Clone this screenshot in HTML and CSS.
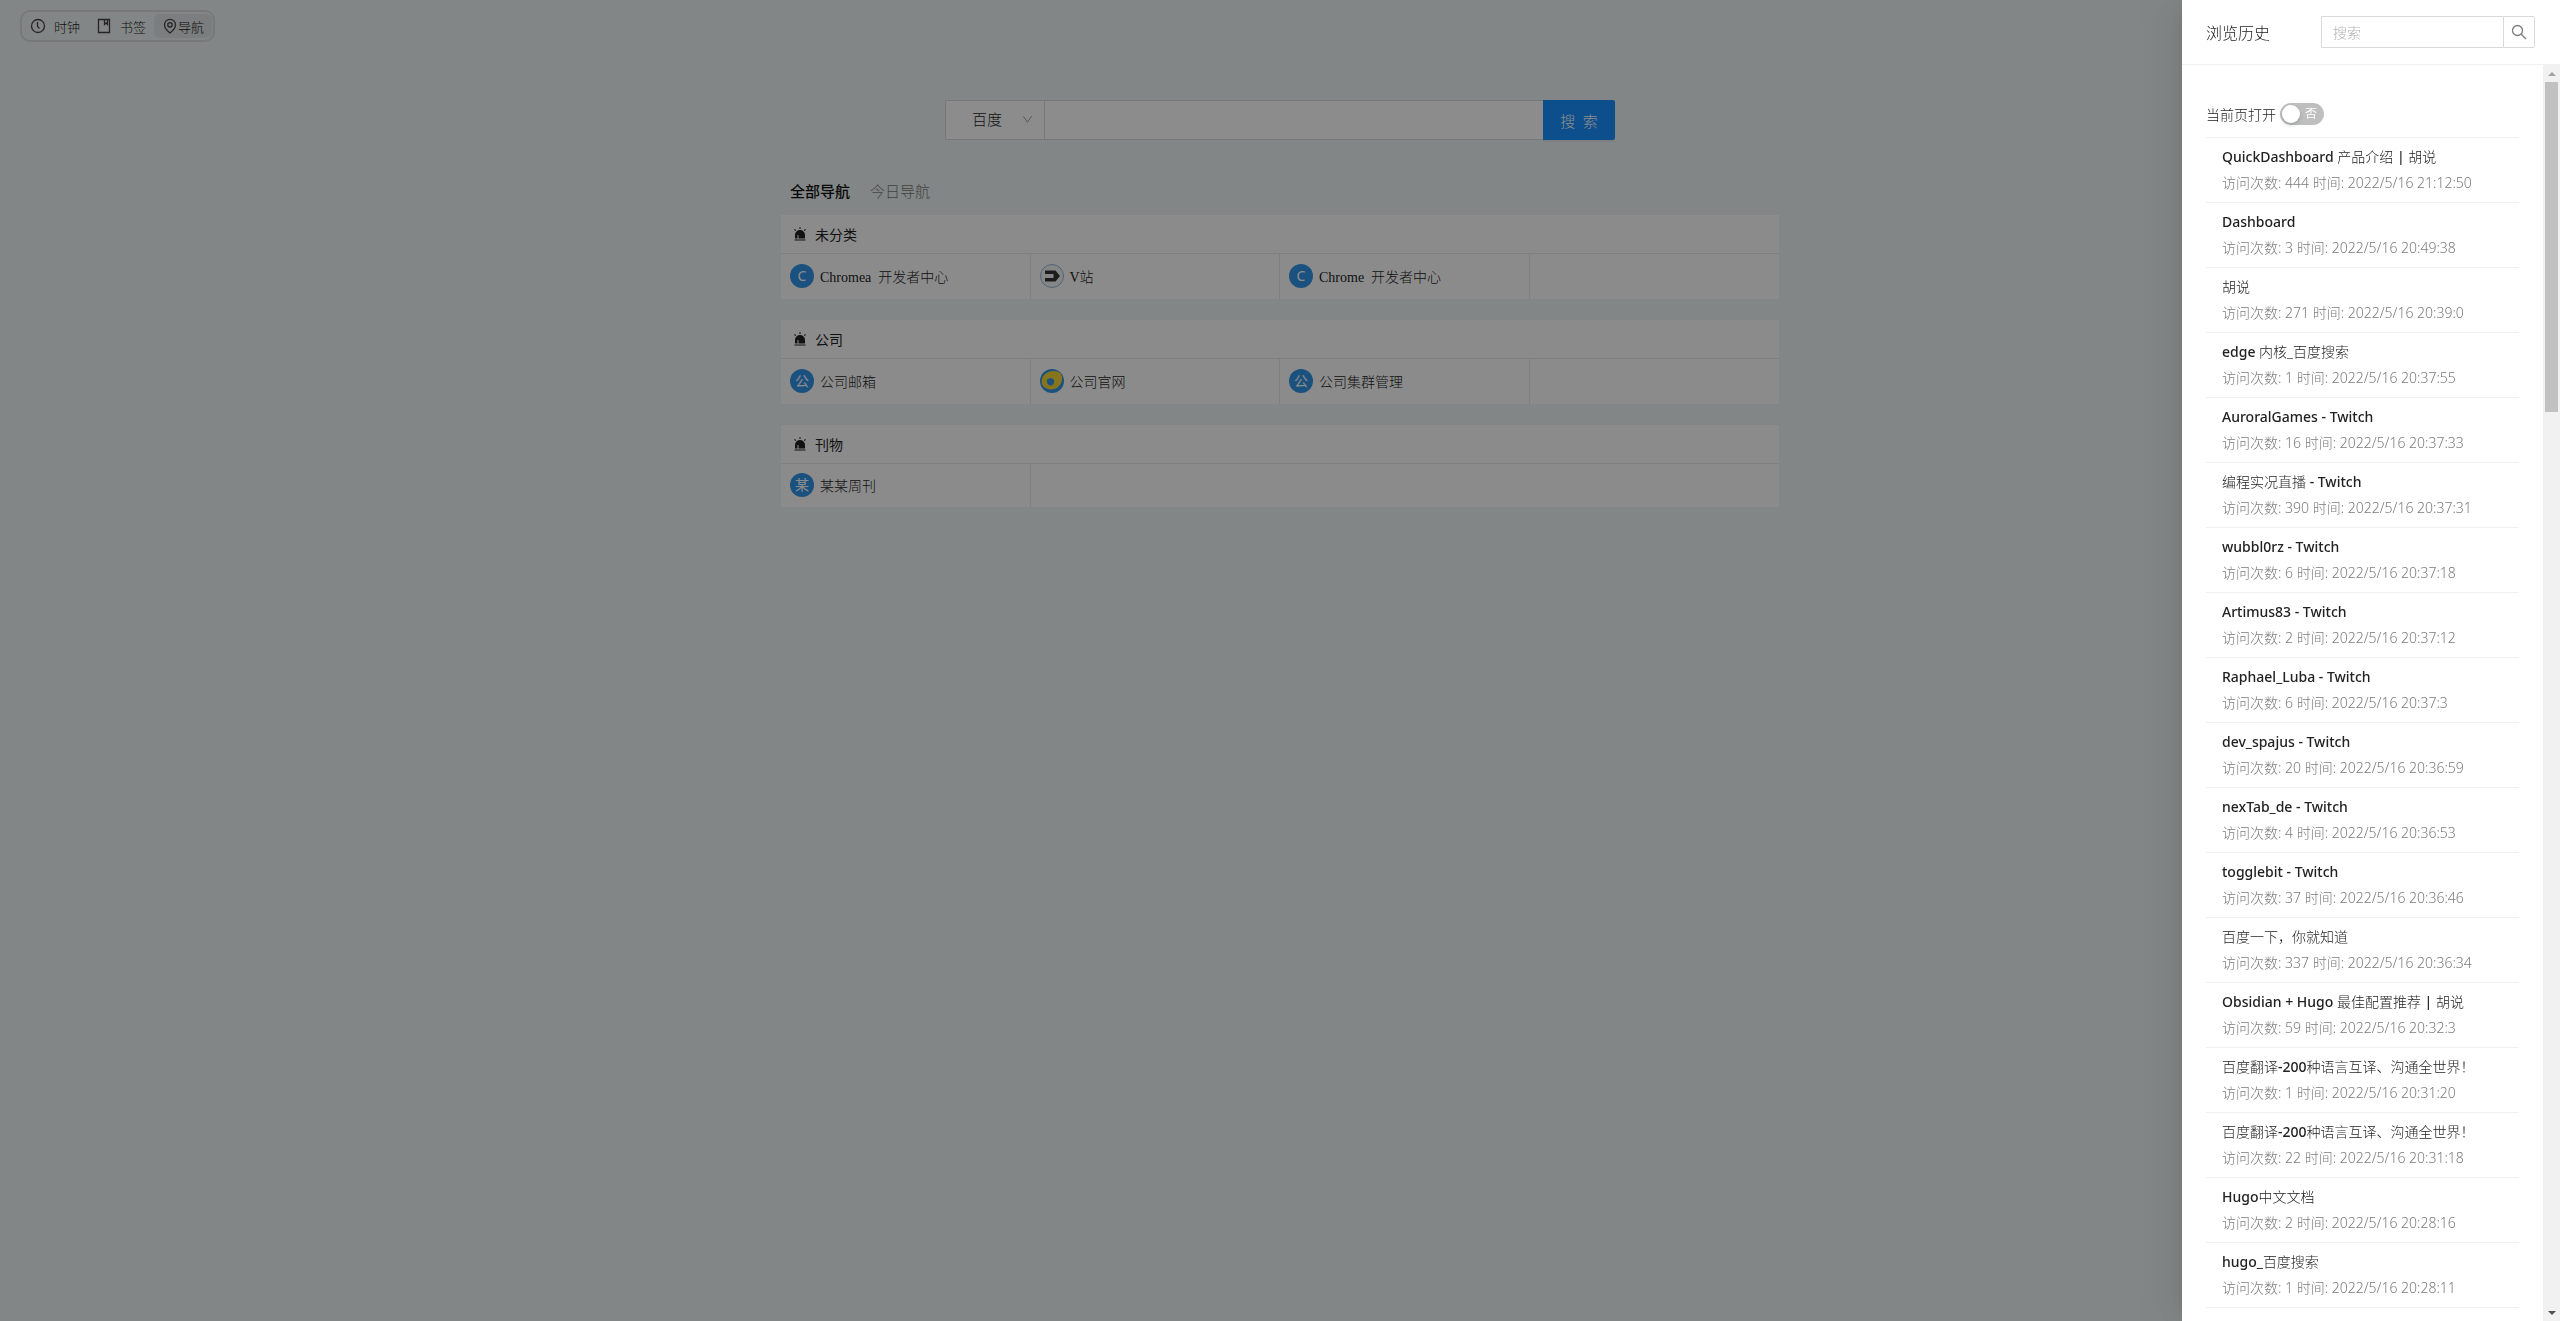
FILE: index.html
```html
<!DOCTYPE html>
<html lang="zh-CN">
<head>
    <meta charset="UTF-8">
    <meta name="viewport" content="width=device-width, initial-scale=1.0">
    <title>Dashboard</title>
    <link rel="stylesheet" href="styles.css">
</head>
<body>
    <svg class="sprite" aria-hidden="true">
        <symbol id="alert" viewBox="0 0 14 14">
            <path d="M2 11.500V8a5 5 0 0 1 10 0v3.500H5.500V8h-1v3.500zM1.500 12.500h11v1h-11zM6.500 0h1v2h-1zM1 2.700l.8-.8L3.200 3.300l-.8.8zM13 2.700l-.8-.8-1.400 1.400.8.8z"/>
        </symbol>
    </svg>

    <nav class="toolbar">
        <button class="tool">
            <svg class="tool-icon" viewBox="0 0 16 16"><circle cx="8" cy="8" r="6.500"/><path d="M7.500 4v4.500l2 2"/></svg>
            <span>时钟</span>
        </button>
        <button class="tool">
            <svg class="tool-icon" viewBox="0 0 16 16"><path d="M2.500 1.500h11v13h-11zM8.500 1.500v5l1.500-1.500 1.500 1.500v-5"/></svg>
            <span>书签</span>
        </button>
        <button class="tool active">
            <svg class="tool-icon" viewBox="0 0 16 16"><path d="M8 15C4 12 2.500 9.500 2.500 6.800a5.500 5.500 0 0 1 11 0C13.500 9.500 12 12 8 15z"/><circle cx="8" cy="6.800" r="2.200"/></svg>
            <span>导航</span>
        </button>
    </nav>

    <main class="content">
        <form class="search">
            <div class="engine">
                <select class="engine-select" aria-label="搜索引擎">
                    <option>百度</option>
                </select>
                <svg class="engine-arrow" viewBox="0 0 12 12"><path d="M1.500 2.500L6 9l4.500-6.500"/></svg>
            </div>
            <input class="search-input" type="text" aria-label="搜索内容">
            <button class="search-btn" type="button">搜&nbsp; 索</button>
        </form>

        <div class="tabs">
            <button class="tab active">全部导航</button>
            <button class="tab">今日导航</button>
        </div>

        <section class="card">
            <h2 class="card-title"><svg class="alert-icon"><use href="#alert"/></svg>未分类</h2>
            <div class="card-row">
                <a class="site" href="#"><span class="avatar">C</span>Chromea&nbsp; 开发者中心</a>
                <a class="site" href="#">
                    <svg class="avatar-img" viewBox="0 0 24 24"><circle cx="12" cy="12" r="11.500" fill="#f4f4f4" stroke="#8fb4d8"/><path d="M5 6.500h10.500L20 12l-4.500 5.500H5v-3.500h8.500v-4H5z" fill="#333"/></svg>V站
                </a>
                <a class="site" href="#"><span class="avatar">C</span>Chrome&nbsp; 开发者中心</a>
            </div>
        </section>

        <section class="card">
            <h2 class="card-title"><svg class="alert-icon"><use href="#alert"/></svg>公司</h2>
            <div class="card-row">
                <a class="site" href="#"><span class="avatar">公</span>公司邮箱</a>
                <a class="site" href="#">
                    <svg class="avatar-img" viewBox="0 0 24 24"><circle cx="12" cy="12" r="12" fill="#3194e8"/><path d="M2 15C0 8 6 2 14 2c6 0 9 3.500 8 9C21 17 16 21 10 20.500 6 20 3 18 2 15z" fill="#f5d534"/><path d="M7 10.500l3.500-1.500 3.500 1.500c.5 4-1 6-3.500 6S6.500 14 7 10.500z" fill="#3194e8"/></svg>公司官网
                </a>
                <a class="site" href="#"><span class="avatar">公</span>公司集群管理</a>
            </div>
        </section>

        <section class="card">
            <h2 class="card-title"><svg class="alert-icon"><use href="#alert"/></svg>刊物</h2>
            <div class="card-row">
                <a class="site" href="#"><span class="avatar">某</span>某某周刊</a>
            </div>
        </section>
    </main>

    <div class="mask"></div>

    <aside class="drawer">
        <header class="drawer-header">
            <h1 class="drawer-title">浏览历史</h1>
            <form class="history-search">
                <input class="history-input" type="text" placeholder="搜索" aria-label="搜索历史">
                <button class="history-btn" type="button" aria-label="搜索">
                    <svg class="search-icon" viewBox="0 0 16 16"><circle cx="6.500" cy="6.500" r="5"/><path d="M10.200 10.200L15 15"/></svg>
                </button>
            </form>
        </header>
        <div class="drawer-body">
            <div class="history">
                <div class="switch-row">
                    <label for="current">当前页打开</label>
                    <span class="switch">
                        <input class="switch-input" type="checkbox" id="current">
                        <span class="switch-text">否</span>
                    </span>
                </div>
                <ul class="history-list">
                    <li><a href="#"><b>QuickDashboard</b> 产品介绍 <b>|</b> 胡说</a><p>访问次数: 444 时间: 2022/5/16 21:12:50</p></li>
                    <li><a href="#"><b>Dashboard</b></a><p>访问次数: 3 时间: 2022/5/16 20:49:38</p></li>
                    <li><a href="#">胡说</a><p>访问次数: 271 时间: 2022/5/16 20:39:0</p></li>
                    <li><a href="#"><b>edge</b> 内核_百度搜索</a><p>访问次数: 1 时间: 2022/5/16 20:37:55</p></li>
                    <li><a href="#"><b>AuroralGames - Twitch</b></a><p>访问次数: 16 时间: 2022/5/16 20:37:33</p></li>
                    <li><a href="#">编程实况直播 <b>- Twitch</b></a><p>访问次数: 390 时间: 2022/5/16 20:37:31</p></li>
                    <li><a href="#"><b>wubbl0rz - Twitch</b></a><p>访问次数: 6 时间: 2022/5/16 20:37:18</p></li>
                    <li><a href="#"><b>Artimus83 - Twitch</b></a><p>访问次数: 2 时间: 2022/5/16 20:37:12</p></li>
                    <li><a href="#"><b>Raphael_Luba - Twitch</b></a><p>访问次数: 6 时间: 2022/5/16 20:37:3</p></li>
                    <li><a href="#"><b>dev_spajus - Twitch</b></a><p>访问次数: 20 时间: 2022/5/16 20:36:59</p></li>
                    <li><a href="#"><b>nexTab_de - Twitch</b></a><p>访问次数: 4 时间: 2022/5/16 20:36:53</p></li>
                    <li><a href="#"><b>togglebit - Twitch</b></a><p>访问次数: 37 时间: 2022/5/16 20:36:46</p></li>
                    <li><a href="#">百度一下，你就知道</a><p>访问次数: 337 时间: 2022/5/16 20:36:34</p></li>
                    <li><a href="#"><b>Obsidian + Hugo</b> 最佳配置推荐 <b>|</b> 胡说</a><p>访问次数: 59 时间: 2022/5/16 20:32:3</p></li>
                    <li><a href="#">百度翻译<b>-200</b>种语言互译、沟通全世界！</a><p>访问次数: 1 时间: 2022/5/16 20:31:20</p></li>
                    <li><a href="#">百度翻译<b>-200</b>种语言互译、沟通全世界！</a><p>访问次数: 22 时间: 2022/5/16 20:31:18</p></li>
                    <li><a href="#"><b>Hugo</b>中文文档</a><p>访问次数: 2 时间: 2022/5/16 20:28:16</p></li>
                    <li><a href="#"><b>hugo_</b>百度搜索</a><p>访问次数: 1 时间: 2022/5/16 20:28:11</p></li>
                </ul>
            </div>
            <div class="scrollbar">
                <span class="arrow up"></span>
                <div class="track"><div class="thumb"></div></div>
                <span class="arrow down"></span>
            </div>
        </div>
    </aside>
</body>
</html>
```
FILE: styles.css
```css
* {
    box-sizing: border-box;
}

body {
    margin: 0;
    height: 100vh;
    overflow: hidden;
    background: #eff4f4;
    font-family: "Liberation Serif", "Noto Sans CJK SC", serif;
    font-size: 14px;
    font-weight: 300;
    color: #222;
}

button, input, select {
    font-family: inherit;
    font-size: inherit;
    font-weight: inherit;
    color: inherit;
}

a {
    color: inherit;
    text-decoration: none;
}

h1, h2, p, ul {
    margin: 0;
    padding: 0;
}

.sprite {
    display: none;
}

/* top left switcher */
.toolbar {
    display: flex;
    width: fit-content;
    margin: 10px 0 0 20px;
    border: 2px solid #d9dddd;
    border-radius: 10px;
    height: 32px;
    padding: 2px 1px 2px 0;
    font-size: 13px;
}
.tool {
    display: flex;
    align-items: center;
    gap: 8px;
    border: none;
    background: none;
    padding: 0 8px;
    border-radius: 6px;
}
.tool.active {
    background: #e0e3e6;
    gap: 0;
}
.tool-icon {
    width: 16px;
    height: 16px;
    fill: none;
    stroke: #444;
    stroke-width: 1.3;
}

.content {
    width: 1000px;
    margin: 0 auto;
    padding: 58px 1px 0;
}

.search {
    display: flex;
    width: 670px;
    height: 40px;
    margin: 0 auto;
    font-size: 15px;
}
.engine {
    position: relative;
    width: 100px;
}
.engine-select {
    appearance: none;
    width: 100%;
    height: 100%;
    border: 1px solid #d9d9d9;
    border-radius: 2px 0 0 2px;
    background: #fff;
    padding: 0 26px;
}
.engine-arrow {
    position: absolute;
    right: 12px;
    top: 14px;
    width: 11px;
    height: 11px;
    fill: none;
    stroke: #999;
}
.search-input {
    flex: 1;
    min-width: 0;
    border: solid #d9d9d9;
    border-width: 1px 0;
    background: #fff;
}
.search-btn {
    width: 72px;
    border: none;
    border-radius: 0 2px 2px 0;
    background: #1890ff;
    color: #fff;
    box-shadow: 0 2px 0 rgba(0, 0, 0, 0.05);
}

.tabs {
    display: flex;
    gap: 20px;
    padding: 40px 9px 11px;
}
.tab {
    border: none;
    background: none;
    padding: 0;
    font-size: 15px;
    line-height: 24px;
    color: #777;
}
.tab.active {
    color: #111;
    font-weight: 500;
}

.card {
    margin-bottom: 21px;
    background: #fefefe;
}
.card-title {
    display: flex;
    align-items: center;
    gap: 8px;
    height: 39px;
    padding: 0 12px 1px;
    border-bottom: 1px solid #e8e8e8;
    font-size: 14px;
    font-weight: 400;
}
.alert-icon {
    width: 14px;
    height: 14px;
    fill: #222;
}
.card-row {
    display: grid;
    grid-template-columns: repeat(4, 1fr);
}
.site {
    display: flex;
    align-items: center;
    gap: 6px;
    padding: 9px 9px 10px;
    border-right: 1px solid #e8e8e8;
}
.site:nth-child(4) {
    border-right: none;
}
.avatar {
    width: 24px;
    height: 24px;
    border-radius: 50%;
    background: #3194e8;
    color: #fff;
    font-family: "Noto Sans", "Noto Sans CJK SC", sans-serif;
    font-weight: 400;
    line-height: 24px;
    text-align: center;
}
.avatar-img {
    width: 24px;
    height: 24px;
    margin: 1px 0;
}

.mask {
    position: fixed;
    inset: 0;
    background: rgba(0, 0, 0, 0.45);
}

/* history drawer */
.drawer {
    position: fixed;
    top: 0;
    right: 0;
    bottom: 0;
    width: 378px;
    display: flex;
    flex-direction: column;
    background: #fff;
    box-shadow: -6px 0 16px -8px rgba(0, 0, 0, 0.08), -9px 0 28px 0 rgba(0, 0, 0, 0.05), -12px 0 48px 16px rgba(0, 0, 0, 0.03);
    font-family: "Noto Sans", "Noto Sans CJK SC", sans-serif;
}
.drawer-header {
    display: flex;
    align-items: center;
    justify-content: space-between;
    height: 65px;
    padding: 0 25px 0 24px;
    border-bottom: 1px solid #f0f0f0;
}
.drawer-title {
    font-size: 16px;
    font-weight: 300;
}
.history-search {
    display: flex;
    width: 214px;
    height: 32px;
}
.history-input {
    flex: 1;
    min-width: 0;
    border: 1px solid #d9d9d9;
    border-right: none;
    border-radius: 2px 0 0 2px;
    padding: 4px 11px;
}
.history-input::placeholder {
    color: #b0b0b0;
}
.history-btn {
    display: flex;
    align-items: center;
    justify-content: center;
    width: 32px;
    padding: 0;
    border: 1px solid #d9d9d9;
    border-radius: 0 2px 2px 0;
    background: #fff;
}
.search-icon {
    width: 16px;
    height: 16px;
    fill: none;
    stroke: #7c7c7c;
    stroke-width: 1.3;
}

.drawer-body {
    flex: 1;
    display: flex;
    min-height: 0;
}
.history {
    flex: 1;
    padding: 38px 24px 0;
    overflow: hidden;
}
.switch-row {
    display: flex;
    align-items: center;
    gap: 4px;
    height: 22px;
    margin-bottom: 12px;
}
.switch {
    position: relative;
    height: 22px;
}
.switch-input {
    appearance: none;
    display: block;
    width: 44px;
    height: 22px;
    margin: 0;
    border-radius: 11px;
    background: #bfbfbf;
}
.switch-input::before {
    content: "";
    display: block;
    width: 18px;
    height: 18px;
    margin: 2px;
    border-radius: 50%;
    background: #fff;
    box-shadow: 0 2px 4px rgba(0, 35, 11, 0.2);
    float: left;
}
.switch-text {
    position: absolute;
    top: 0;
    right: 7px;
    line-height: 22px;
    font-size: 12px;
    font-weight: 400;
    color: #fff;
}

.history-list {
    list-style: none;
    border-top: 1px solid #f0f0f0;
}
.history-list li {
    height: 65px;
    padding: 8px 16px;
    border-bottom: 1px solid #f0f0f0;
    line-height: 22px;
    white-space: nowrap;
}
.history-list a {
    display: block;
    margin-bottom: 4px;
}
.history-list b {
    font-weight: 500;
}
.history-list p {
    color: #7c7c7c;
}

.scrollbar {
    display: flex;
    flex-direction: column;
    width: 17px;
    background: #f1f1f1;
}
.arrow {
    height: 17px;
    display: flex;
    align-items: center;
    justify-content: center;
}
.arrow::before {
    content: "";
    border: 4px solid transparent;
}
.arrow.up::before {
    border-top: none;
    border-bottom-color: #a3a3a3;
}
.arrow.down::before {
    border-bottom: none;
    border-top-color: #505050;
}
.track {
    flex: 1;
    padding: 0 2px;
}
.thumb {
    height: 27%;
    background: #c1c1c1;
}
```
